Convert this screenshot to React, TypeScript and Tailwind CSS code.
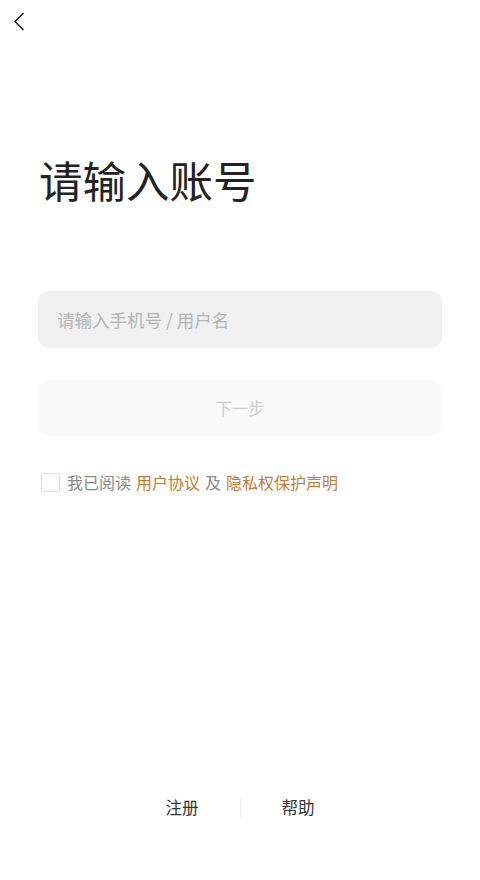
import { useState } from "react"

const font = { fontFamily: '"Noto Sans CJK SC", "Noto Sans", sans-serif' }

export default function App() {
  const [account, setAccount] = useState("")
  const [agreed, setAgreed] = useState(false)

  return (
    <div className="flex h-[880px] w-[480px] flex-col bg-white" style={font}>
      {/* Top bar */}
      <div className="flex h-[42px] items-start px-[12px] pt-[11px]">
        <button className="flex h-[20px] w-[14px] items-center justify-center">
          <svg width="12" height="19" viewBox="0 0 12 19" fill="none">
            <path d="M10.5 1 L2 9.5 L10.5 18" stroke="#222" strokeWidth="1.5" strokeLinejoin="miter" />
          </svg>
        </button>
      </div>

      <div className="flex flex-col px-[38px]">
        <h1 className="mt-[107px] pl-[1px] text-[43.5px] leading-[62px] font-normal text-[#222]">请输入账号</h1>

        <input
          value={account}
          onChange={(e) => setAccount(e.target.value)}
          placeholder="请输入手机号 / 用户名"
          className="mt-[80px] h-[57px] w-full rounded-[11px] bg-[#f0f0f0] px-[19px] text-[17.5px] text-[#222] outline-none placeholder:text-[#b3b3b3]"
        />

        <button className="mt-[32px] h-[56px] w-full rounded-[11px] bg-[#fafafa] text-[16.5px] text-[#cccccc]">
          下一步
        </button>

        <label className="mt-[34px] flex items-center gap-[7px] pl-[3px] text-[16px] text-[#888]">
          <input
            type="checkbox"
            checked={agreed}
            onChange={() => setAgreed(!agreed)}
            className="h-[19px] w-[19px] appearance-none rounded-[2px] border border-[#dddddd] bg-white"
          />
          <span className="flex items-center gap-[5px]">
            <span>我已阅读</span>
            <span className="text-[#bf7d33]">用户协议</span>
            <span>及</span>
            <span className="text-[#bf7d33]">隐私权保护声明</span>
          </span>
        </label>
      </div>

      <div className="mt-auto mb-[60px] flex items-center justify-center gap-[41px] text-[16.5px] text-[#333]">
        <span>注册</span>
        <span className="h-[18px] w-px bg-[#eeeeee]" />
        <span>帮助</span>
      </div>
    </div>
  )
}
